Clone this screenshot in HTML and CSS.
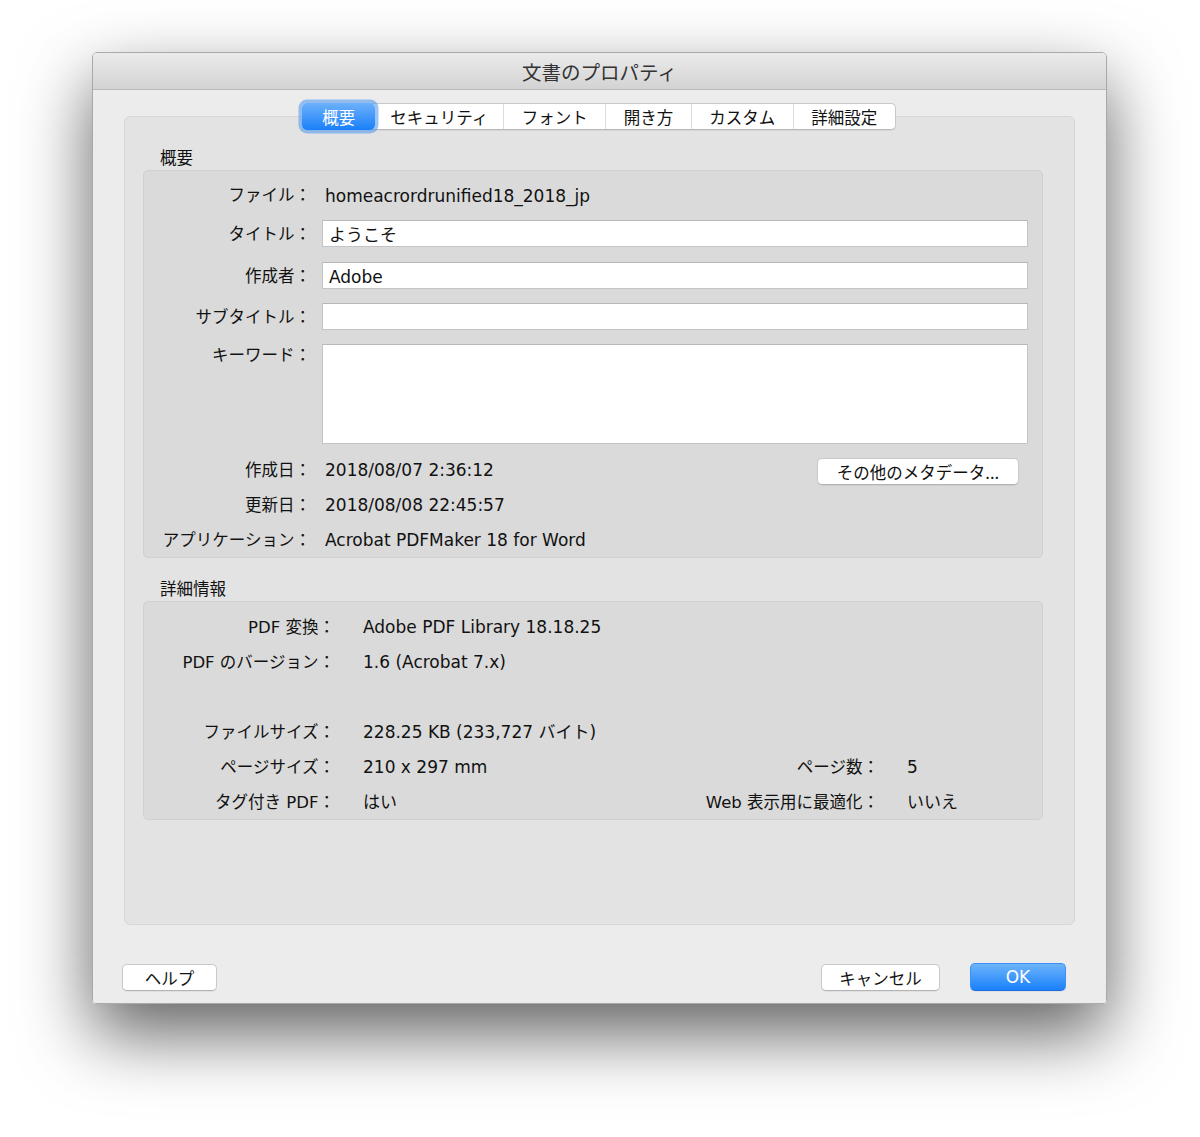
FILE: index.html
```html
<!DOCTYPE html>
<html lang="ja">
<head>
<meta charset="utf-8">
<title>文書のプロパティ</title>
<link rel="stylesheet" href="styles.css">
</head>
<body>
<div class="window">
  <div class="titlebar">文書のプロパティ</div>
  <div class="content">
    <div class="tabs">
      <div class="tab active">概要</div>
      <div class="tab sec">セキュリティ</div>
      <div class="tab">フォント</div>
      <div class="tab">開き方</div>
      <div class="tab">カスタム</div>
      <div class="tab">詳細設定</div>
    </div>
    <div class="panel">
      <div class="section-label">概要</div>
      <div class="group summary">
        <div class="row row-file"><div class="label">ファイル：</div><div class="value">homeacrordrunified18_2018_jp</div></div>
        <div class="row row-input first"><div class="label">タイトル：</div><div class="field">ようこそ</div></div>
        <div class="row row-input second"><div class="label">作成者：</div><div class="field">Adobe</div></div>
        <div class="row row-input"><div class="label">サブタイトル：</div><div class="field"></div></div>
        <div class="row row-keywords"><div class="label">キーワード：</div><div class="field area"></div></div>
        <div class="row row-info first"><div class="label">作成日：</div><div class="value">2018/08/07 2:36:12</div><div class="button meta">その他のメタデータ...</div></div>
        <div class="row row-info"><div class="label">更新日：</div><div class="value">2018/08/08 22:45:57</div></div>
        <div class="row row-info"><div class="label">アプリケーション：</div><div class="value">Acrobat PDFMaker 18 for Word</div></div>
      </div>
      <div class="section-label second">詳細情報</div>
      <div class="group details">
        <div class="label">PDF 変換：</div><div class="value">Adobe PDF Library 18.18.25</div><div></div><div></div>
        <div class="label">PDF のバージョン：</div><div class="value">1.6 (Acrobat 7.x)</div><div></div><div></div>
        <div class="spacer"></div>
        <div class="label">ファイルサイズ：</div><div class="value">228.25 KB (233,727 バイト)</div><div></div><div></div>
        <div class="label">ページサイズ：</div><div class="value">210 x 297 mm</div><div class="label">ページ数：</div><div class="value">5</div>
        <div class="label">タグ付き PDF：</div><div class="value">はい</div><div class="label">Web 表示用に最適化：</div><div class="value">いいえ</div>
      </div>
    </div>
    <div class="footer">
      <div class="button help">ヘルプ</div>
      <div class="button cancel">キャンセル</div>
      <div class="button ok">OK</div>
    </div>
  </div>
</div>
</body>
</html>
```

FILE: styles.css
```css
html, body {
  margin: 0;
  padding: 0;
  background: #ffffff;
}

body {
  font-family: "DejaVu Sans", "Noto Sans CJK JP", sans-serif;
  color: #111111;
  width: 1200px;
  height: 1137px;
  overflow: hidden;
}

.window {
  margin: 52px 0 0 92px;
  width: 1015px;
  height: 952px;
  box-sizing: border-box;
  border: 1px solid #a9a9a9;
  border-radius: 5px 5px 4px 4px;
  overflow: hidden;
  box-shadow: 0 30px 70px rgba(0, 0, 0, 0.62);
  display: flex;
  flex-direction: column;
}

.titlebar {
  height: 36px;
  line-height: 37px;
  border-bottom: 1px solid #b9b9b9;
  background: linear-gradient(#ebebeb, #d3d3d3);
  text-align: center;
  font-family: "Noto Sans CJK JP", sans-serif;
  font-size: 19.5px;
  color: #333333;
  flex: none;
}

.content {
  flex: 1;
  background: #ececec;
  padding-top: 13px;
}

.tabs {
  position: relative;
  z-index: 1;
  display: flex;
  justify-content: center;
  width: max-content;
  margin: 0 auto -14px;
  height: 27px;
  box-sizing: border-box;
  background: #ffffff;
  border: 1px solid #c8c8c8;
  border-bottom-color: #b8b8b8;
  border-radius: 5px;
  box-shadow: 0 1px 1px rgba(0, 0, 0, 0.06);
  font-family: "Noto Sans CJK JP", sans-serif;
  font-size: 16.5px;
}

.tab {
  padding: 1px 17.5px 0;
  line-height: 24px;
  border-left: 1px solid #dcdcdc;
  color: #111111;
}

.tab.sec {
  padding: 1px 15px 0;
  border-left: none;
}

.tab.active {
  position: relative;
  padding: 1px 20px 0;
  border-left: none;
  margin: -1px 0 -1px -2px;
  line-height: 26px;
  color: #ffffff;
  background: linear-gradient(#6cb1fa, #1a7ff9);
  border-radius: 5px;
  box-shadow: 0 0 0 3.5px rgba(74, 150, 240, 0.55);
}

.panel {
  margin: 0 31px;
  height: 809px;
  box-sizing: border-box;
  border: 1px solid #d6d6d6;
  border-radius: 6px;
  background: #e3e3e3;
  padding: 30px 31px 0 18px;
}

.section-label {
  font-family: "Noto Sans CJK JP", sans-serif;
  font-size: 16.5px;
  line-height: 20px;
  padding-left: 17px;
  margin-bottom: 3px;
}

.section-label.second {
  margin-top: 20px;
}

.group {
  border: 1px solid #d1d1d1;
  border-radius: 5px;
  background: #dadada;
}

.label {
  font-size: 16.5px;
  line-height: 20px;
  padding-top: 2px;
  text-align: right;
  white-space: nowrap;
}

.value {
  font-size: 17px;
  line-height: 20px;
  padding-top: 1px;
  white-space: nowrap;
}

.summary {
  padding: 11px 14px 0 0;
}

.row {
  display: flex;
  align-items: center;
}

.row .label {
  width: 167px;
  flex: none;
}

.row .value {
  margin-left: 14px;
}

.row-file {
  height: 26px;
}

.row-input {
  height: 27px;
  margin-top: 14px;
}

.row-input.first {
  margin-top: 12px;
}

.row-input.second {
  margin-top: 15px;
}

.field {
  flex: 1;
  margin-left: 11px;
  height: 27px;
  box-sizing: border-box;
  background: #ffffff;
  border: 1px solid #c4c4c4;
  border-top-color: #b8b8b8;
  padding: 3px 0 0 6px;
  font-size: 17px;
  line-height: 23px;
  color: #111111;
}

.row-keywords {
  align-items: flex-start;
  margin-top: 14px;
}

.field.area {
  height: 100px;
}

.row-info {
  height: 35px;
}

.row-info.first {
  margin-top: 8px;
}

.button {
  box-sizing: border-box;
  height: 27px;
  background: #ffffff;
  border: 1px solid #c9c9c9;
  border-bottom-color: #b3b3b3;
  border-radius: 5px;
  box-shadow: 0 1px 1px rgba(0, 0, 0, 0.06);
  font-family: "Noto Sans CJK JP", sans-serif;
  font-size: 16.5px;
  line-height: 25px;
  padding-top: 1px;
  text-align: center;
  color: #111111;
}

.button.meta {
  margin-left: auto;
  margin-right: 9px;
  margin-top: 4px;
  width: 202px;
}

.details {
  padding-top: 7px;
  display: grid;
  grid-template-columns: 191px 288px 200px auto;
  grid-auto-rows: 35px;
  column-gap: 28px;
  align-items: center;
}

.details .spacer {
  grid-column: 1 / -1;
}

.footer {
  display: flex;
  align-items: center;
  padding: 38px 40px 0 29px;
}

.button.help {
  width: 95px;
}

.button.cancel {
  width: 119px;
  margin-left: auto;
}

.button.ok {
  width: 96px;
  height: 28px;
  margin-left: 30px;
  color: #ffffff;
  background: linear-gradient(#6db4fb, #1a80fa);
  border: 1px solid #3d8ff5;
  border-bottom-color: #1e6fe0;
  font-family: "DejaVu Sans", "Noto Sans CJK JP", sans-serif;
  font-size: 17px;
  line-height: 25px;
}
```
